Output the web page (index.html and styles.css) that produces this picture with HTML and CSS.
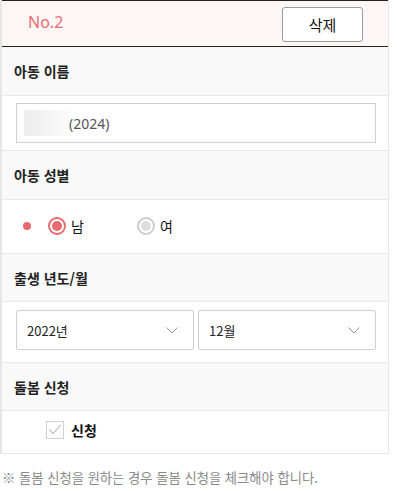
FILE: index.html
```html
<!DOCTYPE html>
<html lang="ko">
<head>
<meta charset="utf-8">
<link rel="stylesheet" href="styles.css">
</head>
<body>
<div class="card">
  <div class="head">
    <span class="no">No.2</span>
    <button class="del" type="button">삭제</button>
  </div>
  <div class="label">아동 이름</div>
  <div class="field">
    <div class="input"><span class="blur"></span><span class="val">(2024)</span></div>
  </div>
  <div class="label">아동 성별</div>
  <div class="field radios">
    <span class="req"></span>
    <label class="radio on"><span class="ring"><span class="dot"></span></span><span>남</span></label>
    <label class="radio off"><span class="ring"><span class="dot"></span></span><span>여</span></label>
  </div>
  <div class="label short">출생 년도/월</div>
  <div class="field selects">
    <div class="select"><span>2022년</span><svg class="chev" width="12" height="7" viewBox="0 0 12 7"><path d="M0.5 0.5 L6 6 L11.5 0.5" fill="none" stroke="#999" stroke-width="1"/></svg></div>
    <div class="select"><span>12월</span><svg class="chev" width="12" height="7" viewBox="0 0 12 7"><path d="M0.5 0.5 L6 6 L11.5 0.5" fill="none" stroke="#999" stroke-width="1"/></svg></div>
  </div>
  <div class="label short">돌봄 신청</div>
  <div class="field check">
    <label class="cb"><span class="box"><svg width="14" height="11" viewBox="0 0 14 11"><path d="M1 5.5 L5 9.5 L13 1" fill="none" stroke="#c8c8c8" stroke-width="1.3"/></svg></span><span class="cbt">신청</span></label>
  </div>
</div>
<p class="note">※ 돌봄 신청을 원하는 경우 돌봄 신청을 체크해야 합니다.</p>
</body>
</html>
```
FILE: styles.css
```css
html, body { margin: 0; padding: 0; background: #fff; }
body {
  font-family: "Noto Sans CJK KR", "Noto Sans", sans-serif;
  color: #222;
  width: 397px;
}
.card {
  width: 386px;
  border-left: 2px solid #e6e6e6;
  border-right: 1px solid #e6e6e6;
  border-bottom: 1px solid #e6e6e6;
}
.head {
  height: 45px;
  border-top: 1px solid #222;
  border-bottom: 1px solid #222;
  background: #fdf6f6;
  display: flex;
  align-items: center;
  justify-content: space-between;
  padding: 0 25px 0 26px;
}
.no {
  font-family: "Noto Sans", sans-serif;
  color: #ea6b6e;
  font-size: 16px;
  line-height: 1;
  margin-top: -3px;
}
.del {
  width: 81px;
  height: 35px;
  margin-top: 1px;
  border: 1px solid #9a9a9a;
  border-radius: 3px;
  background: #fff;
  font-family: "Noto Sans CJK KR", sans-serif;
  font-size: 15px;
  color: #111;
  padding: 0;
}
.label {
  box-sizing: border-box;
  background: #f9f9f9;
  border-bottom: 1px solid #e8e8e8;
  display: flex;
  align-items: center;
  padding-left: 12px;
  font-size: 14px;
  font-weight: 700;
  color: #222;
  height: 49px;
}
.label.short { height: 48px; }
.field {
  border-bottom: 1px solid #e8e8e8;
  padding: 7px 12px 7px 14px;
}
.input {
  height: 38px;
  border: 1px solid #cfcfcf;
  display: flex;
  align-items: center;
  padding-left: 7px;
}
.blur {
  width: 45px;
  height: 26px;
  background: linear-gradient(90deg, #ededed, #f6f6f6 70%, #fbfbfb);
}
.val {
  font-family: "Noto Sans", sans-serif;
  font-size: 14px;
  color: #555;
}
.radios {
  height: 40px;
  display: flex;
  align-items: center;
  padding-top: 6px;
  padding-bottom: 7px;
}
.req {
  width: 8px;
  height: 8px;
  border-radius: 50%;
  background: #ea6b6e;
  margin-left: 7px;
  margin-right: 17px;
}
.radio {
  display: flex;
  align-items: center;
  gap: 5px;
  font-size: 14px;
  color: #111;
}
.radio.off { margin-left: 53px; }
.ring {
  width: 14px;
  height: 14px;
  border-radius: 50%;
  border: 2px solid #ccc;
  display: flex;
  align-items: center;
  justify-content: center;
  background: #fff;
}
.dot { width: 10px; height: 10px; border-radius: 50%; background: #ddd; }
.radio.on .ring { border-color: #ea6b6e; }
.radio.on .dot { background: #ea6b6e; }
.selects {
  display: grid;
  grid-template-columns: 1fr 1fr;
  gap: 4px;
  padding-top: 8px;
  padding-bottom: 12px;
}
.select {
  height: 38px;
  border: 1px solid #cfcfcf;
  border-radius: 2px;
  display: flex;
  align-items: center;
  justify-content: space-between;
  padding: 0 15px 0 10px;
  font-size: 13px;
  color: #222;
}
.check {
  height: 42px;
  box-sizing: border-box;
  border-bottom: none;
  display: flex;
  align-items: center;
  padding: 0 0 0 44px;
}
.cb { display: flex; align-items: center; gap: 7px; margin-top: -5px; }
.box {
  width: 16px;
  height: 16px;
  border: 1px solid #cfcfcf;
  display: flex;
  align-items: center;
  justify-content: center;
  background: #fff;
}
.cbt { font-size: 14px; font-weight: 700; color: #111; }
.note {
  margin: 14px 0 0 2px;
  font-size: 13.3px;
  color: #8a8a8a;
}
```
